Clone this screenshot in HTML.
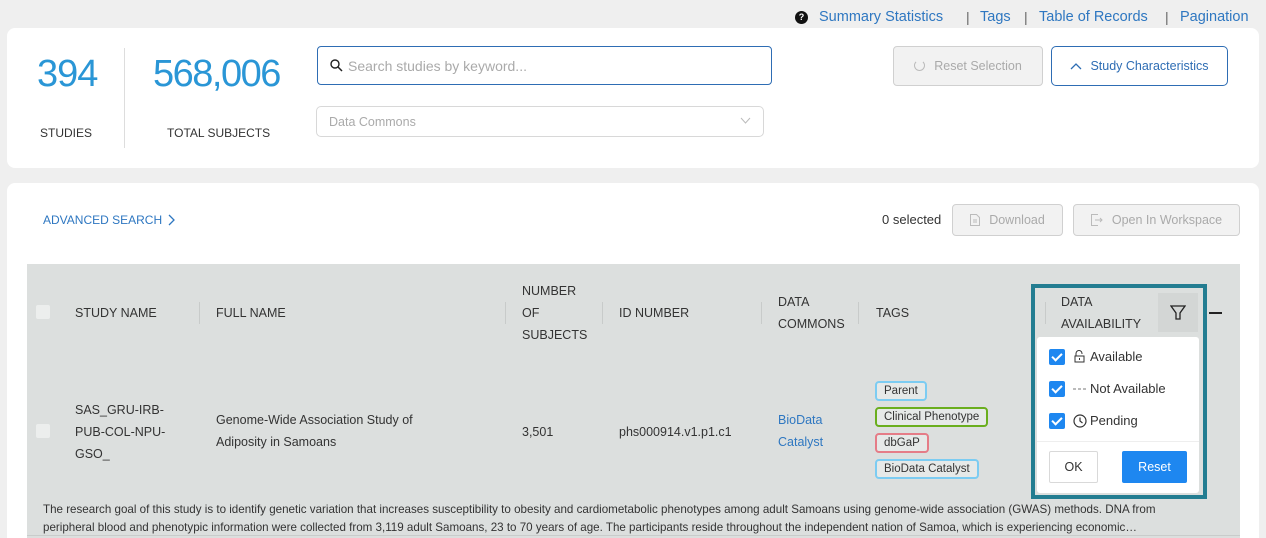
<!DOCTYPE html>
<html><head><meta charset="utf-8"><style>
*{box-sizing:border-box;margin:0;padding:0}
html,body{width:1266px;height:538px;overflow:hidden}
body{background:#efefef;font-family:"Liberation Sans",sans-serif;color:#333;position:relative}
.a{position:absolute;white-space:nowrap}
.card{position:absolute;background:#fff;border-radius:8px}
.hd{font-size:12.5px;color:#333;line-height:22px}
.link{color:#2e77c1}
.hd.link{color:#2e77c1}
.sep{position:absolute;width:1px;background:#c8cbca}
.tag{position:absolute;height:20px;border:2px solid;border-radius:4px;font-size:11.5px;line-height:16px;padding:0 7px;background:#e6e9e8;color:#333}
.cb{position:absolute;width:16px;height:16px;background:#1e87f0;border-radius:2px}
.cb:after{content:"";position:absolute;left:5px;top:2px;width:4px;height:8px;border:solid #fff;border-width:0 2px 2px 0;transform:rotate(45deg)}
.btn{position:absolute;border:1px solid #d0d0d0;border-radius:4px;background:#f2f2f2;color:#aaa;font-size:12.5px;text-align:center}
</style></head><body>
<div class="a" style="left:795px;top:11px;width:13px;height:13px;border-radius:50%;background:#111;color:#fff;font-size:9px;font-weight:bold;text-align:center;line-height:13px">?</div>
<div class="a link" style="left:819px;top:9px;font-size:14.5px">Summary Statistics</div>
<div class="a" style="left:966px;top:9px;font-size:14px;color:#666">|</div>
<div class="a link" style="left:980px;top:9px;font-size:14.5px">Tags</div>
<div class="a" style="left:1024px;top:9px;font-size:14px;color:#666">|</div>
<div class="a link" style="left:1039px;top:9px;font-size:14.5px">Table of Records</div>
<div class="a" style="left:1165px;top:9px;font-size:14px;color:#666">|</div>
<div class="a link" style="left:1180px;top:9px;font-size:14.5px">Pagination</div>

<div class="card" style="left:7px;top:28px;width:1252px;height:140px"></div>
<div class="a" style="left:37px;top:53px;font-size:38px;color:#2a96d6;letter-spacing:-1px">394</div>
<div class="a" style="left:40px;top:126px;font-size:12px">STUDIES</div>
<div class="sep" style="left:124px;top:48px;height:100px;background:#ddd"></div>
<div class="a" style="left:153px;top:53px;font-size:38px;color:#2a96d6;letter-spacing:-1.5px">568,006</div>
<div class="a" style="left:167px;top:126px;font-size:12px">TOTAL SUBJECTS</div>
<div class="a" style="left:317px;top:46px;width:455px;height:39px;border:1px solid #2e6db4;border-radius:4px"></div>
<svg class="a" style="left:330px;top:59px" width="13" height="13" viewBox="0 0 13 13"><circle cx="5" cy="5" r="4" fill="none" stroke="#222" stroke-width="1.4"/><path d="M8 8l4 4" stroke="#222" stroke-width="1.5"/></svg>
<div class="a" style="left:348px;top:58px;font-size:14px;color:#aaa">Search studies by keyword...</div>
<div class="a" style="left:316px;top:106px;width:448px;height:31px;border:1px solid #d8d8d8;border-radius:5px"></div>
<div class="a" style="left:329px;top:115px;font-size:12.5px;color:#aaa">Data Commons</div>
<svg class="a" style="left:740px;top:117px" width="11" height="7"><path d="M1 1l4.5 5L10 1" fill="none" stroke="#bbb"/></svg>
<div class="btn" style="left:893px;top:46px;width:150px;height:40px;line-height:38px"><span style="display:inline-block;width:11px;height:11px;border:1.5px solid #bbb;border-radius:50%;border-top-color:transparent;vertical-align:-1px;margin-right:9px"></span>Reset Selection</div>
<div class="a" style="left:1051px;top:46px;width:177px;height:40px;border:1px solid #2e6db4;border-radius:5px;color:#2e6db4;font-size:12.5px;line-height:38px;text-align:center"><svg width="12" height="8" style="margin-right:8px"><path d="M1 7l5-5 5 5" fill="none" stroke="#2e6db4" stroke-width="1.3"/></svg>Study Characteristics</div>

<div class="card" style="left:7px;top:183px;width:1252px;height:370px"></div>
<div class="a link" style="left:43px;top:213px;font-size:12px">ADVANCED SEARCH</div>
<svg class="a" style="left:168px;top:214px" width="8" height="12"><path d="M1 1l5 5-5 5" fill="none" stroke="#2e77c1" stroke-width="1.3"/></svg>
<div class="a" style="left:882px;top:212px;font-size:13px">0 selected</div>
<div class="btn" style="left:952px;top:204px;width:111px;height:32px;line-height:30px"><svg width="10" height="12" style="vertical-align:-2px;margin-right:9px"><path d="M.5.5h6l3 3v8h-9z M3 6h4M3 8h4" fill="none" stroke="#bbb"/></svg>Download</div>
<div class="btn" style="left:1073px;top:204px;width:167px;height:32px;line-height:30px"><svg width="12" height="12" style="vertical-align:-2px;margin-right:9px"><path d="M7 .5H.5v11H7M4 6h7M9 4l2 2-2 2" fill="none" stroke="#bbb"/></svg>Open In Workspace</div>

<div class="a" style="left:27px;top:264px;width:1213px;height:274px;background:#dcdfde"></div>
<div class="a" style="left:27px;top:535px;width:1213px;height:1px;background:#c9cccb"></div>
<div class="a" style="left:36px;top:305px;width:14px;height:14px;background:#eceeed;border-radius:2px"></div>
<div class="a hd" style="left:75px;top:302px">STUDY NAME</div>
<div class="sep" style="left:199px;top:302px;height:22px"></div>
<div class="a hd" style="left:216px;top:302px">FULL NAME</div>
<div class="sep" style="left:505px;top:302px;height:22px"></div>
<div class="a hd" style="left:522px;top:280px">NUMBER<br>OF<br>SUBJECTS</div>
<div class="sep" style="left:602px;top:302px;height:22px"></div>
<div class="a hd" style="left:619px;top:302px">ID NUMBER</div>
<div class="sep" style="left:761px;top:302px;height:22px"></div>
<div class="a hd" style="left:778px;top:291px">DATA<br>COMMONS</div>
<div class="sep" style="left:858px;top:302px;height:22px"></div>
<div class="a hd" style="left:876px;top:302px">TAGS</div>
<div class="a" style="left:1209px;top:312px;width:13px;height:2px;background:#222"></div>

<div class="a" style="left:36px;top:424px;width:14px;height:14px;background:#eceeed;border-radius:2px"></div>
<div class="a hd" style="left:75px;top:399px">SAS_GRU-IRB-<br>PUB-COL-NPU-<br>GSO_</div>
<div class="a hd" style="left:216px;top:409px">Genome-Wide Association Study of<br>Adiposity in Samoans</div>
<div class="a hd" style="left:522px;top:421px">3,501</div>
<div class="a hd" style="left:619px;top:421px">phs000914.v1.p1.c1</div>
<div class="a hd link" style="left:778px;top:409px">BioData<br>Catalyst</div>
<div class="tag" style="left:875px;top:381px;border-color:#7cccf2">Parent</div>
<div class="tag" style="left:875px;top:407px;border-color:#6aae1e">Clinical Phenotype</div>
<div class="tag" style="left:875px;top:433px;border-color:#e57c87">dbGaP</div>
<div class="tag" style="left:875px;top:459px;border-color:#7cccf2">BioData Catalyst</div>
<div class="a" style="left:43px;top:501px;font-size:11.6px;line-height:18px;color:#333">The research goal of this study is to identify genetic variation that increases susceptibility to obesity and cardiometabolic phenotypes among adult Samoans using genome-wide association (GWAS) methods. DNA from<br>peripheral blood and phenotypic information were collected from 3,119 adult Samoans, 23 to 70 years of age. The participants reside throughout the independent nation of Samoa, which is experiencing economic…</div>

<div class="a" style="left:1031px;top:284px;width:176px;height:215px;border:4px solid #237d91;background:#dcdfde"></div>
<div class="sep" style="left:1045px;top:302px;height:22px"></div>
<div class="a hd" style="left:1061px;top:291px">DATA<br>AVAILABILITY</div>
<div class="a" style="left:1158px;top:293px;width:40px;height:39px;background:#d3d6d5"></div>
<svg class="a" style="left:1170px;top:305px" width="16" height="16"><path d="M1 1h14l-5 7v6h-4V8z" fill="none" stroke="#222" stroke-width="1.3"/></svg>
<div class="a" style="left:1037px;top:337px;width:162px;height:156px;background:#fff;border-radius:3px"></div>
<div class="cb" style="left:1049px;top:349px"></div>
<svg class="a" style="left:1074px;top:350px" width="11" height="13"><path d="M2 6V3.5a3 3 0 0 1 6 0V4M1 6h9v6H1z M5.5 8v2" fill="none" stroke="#333"/></svg>
<div class="a" style="left:1090px;top:349px;font-size:13px">Available</div>
<div class="cb" style="left:1049px;top:381px"></div>
<svg class="a" style="left:1073px;top:388px" width="14" height="2"><path d="M0 1h3M5 1h3M10 1h3" stroke="#777" stroke-width="1"/></svg>
<div class="a" style="left:1090px;top:381px;font-size:13px">Not Available</div>
<div class="cb" style="left:1049px;top:413px"></div>
<svg class="a" style="left:1073px;top:414px" width="14" height="14"><circle cx="7" cy="7" r="6" fill="none" stroke="#333" stroke-width="1.2"/><path d="M7 3.5V7l2.5 2" fill="none" stroke="#333" stroke-width="1.2"/></svg>
<div class="a" style="left:1090px;top:413px;font-size:13px">Pending</div>
<div class="a" style="left:1037px;top:441px;width:162px;height:1px;background:#eee"></div>
<div class="a" style="left:1049px;top:451px;width:49px;height:32px;border:1px solid #d9d9d9;border-radius:2px;font-size:12.5px;text-align:center;line-height:30px">OK</div>
<div class="a" style="left:1122px;top:451px;width:65px;height:32px;background:#1e87f0;color:#fff;border-radius:2px;font-size:12.5px;text-align:center;line-height:32px">Reset</div>
</body></html>
